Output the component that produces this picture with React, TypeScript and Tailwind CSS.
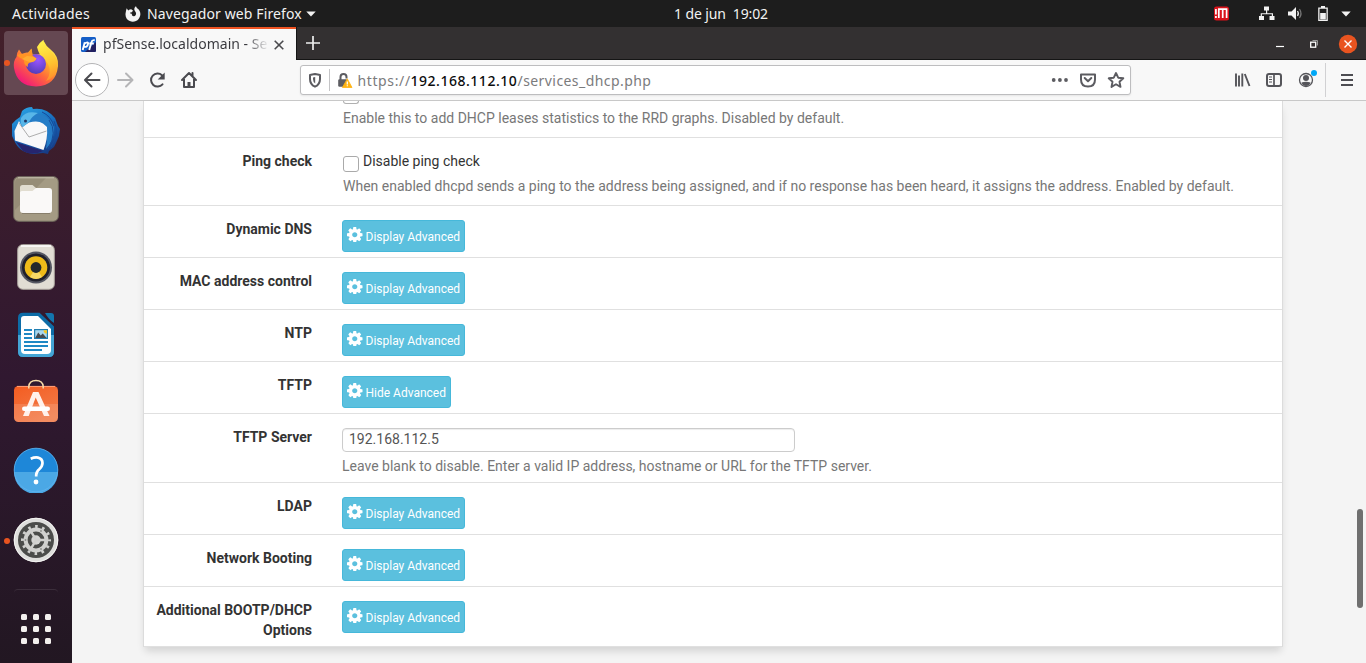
import React from 'react';

const ubuntu = "font-['Noto_Sans',sans-serif]";

const GEAR =
  'M1024 896q0-106-75-181t-181-75-181 75-75 181 75 181 181 75 181-75 75-181zm512-109v222q0 12-8 23t-20 13l-185 28q-19 54-39 91 35 50 107 138 10 12 10 25t-9 23q-27 37-99 108t-94 71q-12 0-26-9l-138-108q-44 23-91 38-16 136-29 186-7 28-36 28h-222q-14 0-24.500-8.500t-11.500-21.500l-28-184q-49-16-90-37l-141 107q-10 9-25 9-14 0-25-11-126-114-165-168-7-10-7-23 0-12 8-23 15-21 51-66.500t54-70.500q-27-50-41-99l-183-27q-13-2-21-12.500t-8-23.500v-222q0-12 8-23t19-13l186-28q14-46 39-92-40-57-107-138-10-12-10-24 0-10 9-23 26-36 98.500-107.500t94.500-71.500q13 0 26 10l138 107q44-23 91-38 16-136 29-186 7-28 36-28h222q14 0 24.500 8.500t11.500 21.500l28 184q49 16 90 37l142-107q9-9 24-9 13 0 25 10 129 119 165 170 7 8 7 22 0 12-8 23-15 21-51 66.500t-54 70.500q26 50 41 98l183 28q13 2 21 12.500t8 23.500z';

function AdvButton({ label }: { label: string }) {
  return (
    <button
      className={`flex h-8 items-center rounded-[3px] border border-[#46b8da] bg-[#5bc0de] pl-1 text-[12px] text-white ${
        label === 'Hide Advanced' ? 'w-[109px]' : 'w-[123px]'
      }`}
    >
      <svg viewBox="0 128 1536 1536" className="mb-[3px] h-[15.5px] w-[15.5px] shrink-0" fill="#fff">
        <path d={GEAR} />
      </svg>
      <span className="ml-[3px] mt-px whitespace-nowrap">{label}</span>
    </button>
  );
}

function Row({ label, h, children }: { label: string; h: string; children: React.ReactNode }) {
  return (
    <div className={`flex shrink-0 border-b border-[#e0e0e0] ${h}`}>
      <div className="w-[168px] shrink-0 pt-[13px] text-right font-bold leading-5 text-[#333]">{label}</div>
      <div className="ml-[30px] pt-[14px]">{children}</div>
    </div>
  );
}

function TopBar() {
  return (
    <div className={`flex h-[27px] shrink-0 items-center bg-[#1d1d1d] text-[14px] text-[#f2f2f2] ${ubuntu}`}>
      <div className="w-[113px] whitespace-nowrap pl-3 tracking-[0.3px]">Actividades</div>
      <svg width="16" height="16" viewBox="0 0 16 16" className="ml-[12px] shrink-0">
        <path
          d="M1.700 2.200 3.200 4.400C4 3.700 5.200 3.300 6.200 3.300L8 4.500 6.900 6.200 5.200 6.400C5 7.400 5.800 8 6.900 7.800 6.600 9.300 7.500 10.500 9 10.300 11 10 11.500 8 10.700 6.200L9.500 4.300C9 2.700 9.700 1 11 .2 11.400 2 13.300 2.700 14.400 4.400 15.900 7 15.700 10.500 13.600 13 11.600 15.500 7.800 16.500 4.800 15.100 1.300 13.500-.1 10 .7 6.500 .8 5 1.400 3.500 1.700 2.200Z"
          fill="#f2f2f2"
        />
      </svg>
      <div className="ml-[6px] w-[155px] whitespace-nowrap tracking-[0.12px]">Navegador web Firefox</div>
      <svg width="10" height="6" viewBox="0 0 10 6" className="ml-[4px] shrink-0">
        <path d="M.3.500h9.400L5 5.500z" fill="#f2f2f2" />
      </svg>
      <div className="-mt-px ml-[358px] w-[96px] whitespace-nowrap tracking-[-0.12px]">1 de jun&nbsp; 19:02</div>
      <div className="grow" />
      <svg width="145" height="20" viewBox="0 0 145 20" className="mr-[7px] shrink-0">
        <rect x="0" y="2.500" width="15" height="14" rx="2.500" fill="#d9131b" />
        <path d="M1.900 5v5.500M1.900 12v2M4.800 14V5.200H12.600V14M8.700 5.200V14" fill="none" stroke="#fff" strokeWidth="1.700" />
        <g fill="#f2f2f2">
          <path d="M50 2.500h5v4h-5zM45 12h5v4h-5zM55.500 12h5v4h-5zM52 6h1.200v3.200h5.800V12h-1.200v-1.700H47.900V12h-1.200V9.200H52z" />
          <path d="M74 7.500h3.500l4.500-4.500v13l-4.500-4.500h-3.500z" />
          <path d="M104.200 3.500h2.800V2h4v1.500h2.800v13.500h-9.600z M105.500 4.800v10.900h7V4.800z" fillRule="evenodd" />
          <path d="M106.200 9h5.600v6.500h-5.600zM127.300 7.500h9.400L132 12.500z" />
        </g>
        <path d="M83.500 7q1.700 2.500 0 5" fill="none" stroke="#e6e6e6" strokeWidth="1.300" />
        <path d="M85.500 5q3 4.500 0 9" fill="none" stroke="#777" strokeWidth="1.200" />
      </svg>
    </div>
  );
}

function Firefox() {
  return (
    <svg width="48" height="48" viewBox="0 0 48 48">
      <defs>
        <linearGradient id="ffBody" x1=".85" y1=".1" x2=".2" y2=".95">
          <stop offset="0" stopColor="#fff44f" />
          <stop offset=".3" stopColor="#ffb52b" />
          <stop offset=".6" stopColor="#ff6a3a" />
          <stop offset="1" stopColor="#f0147e" />
        </linearGradient>
        <linearGradient id="ffTail" x1=".5" y1="0" x2=".7" y2="1">
          <stop offset="0" stopColor="#fff14a" />
          <stop offset=".6" stopColor="#ffc12f" />
          <stop offset="1" stopColor="#ff8b2b" />
        </linearGradient>
        <radialGradient id="ffGlobe" cx=".6" cy=".3" r=".75">
          <stop offset="0" stopColor="#9a55ff" />
          <stop offset="1" stopColor="#4f3cb7" />
        </radialGradient>
      </defs>
      <path d="M7 10.500 10 15Q13 13 16 13.500L19.500 9.500 20.500 15.500 30 15Q26 8 32 2.500 34 7 38 10 47 17 46 27 44 47 24 47.500 5 47 2 29 1 22 4.500 18 5 13 7 10.500Z" fill="url(#ffBody)" />
      <path d="M25 8Q27 4 31.500 .8 32 6.500 38 11.500 47 19 45 29 43 39 34 42 42 31 33 21 27 17 25 8Z" fill="url(#ffTail)" />
      <circle cx="24" cy="25" r="10" fill="url(#ffGlobe)" />
      <path d="M5 16Q10 14 15.500 15.500L19.500 10 20.500 16.500Q23 18.500 24.500 19.500 23 23 18 23.500 15 24.500 16 28 11 25 12 20 8 20 5 16Z" fill="#ff9525" />
      <path d="M15 17Q21 17 24.500 19.500 23 23 18 23.300 14 22 10 20Z" fill="#ffad32" />
    </svg>
  );
}

function Thunderbird() {
  return (
    <svg width="50" height="50" viewBox="0 0 50 50">
      <defs>
        <linearGradient id="tb" x1=".2" y1="0" x2=".7" y2="1">
          <stop offset="0" stopColor="#2aa3e4" />
          <stop offset=".5" stopColor="#1767b9" />
          <stop offset="1" stopColor="#173a83" />
        </linearGradient>
      </defs>
      <path d="M11 5Q15 1 21 1l1 2Q35 1 44 12l3 8 2 3-1 7-3 7-2 4-5 4-1 3-5-1-9 1Q8 47 3 34L1 30V18q3-4 8-7z" fill="url(#tb)" />
      <path d="M5 36 32 45Q21 50 12 45Z" fill="#26256e" />
      <path d="M10 12Q18 4 32 9 41 13 43 22 44 33 35 43 37 30 34 21 28 14 18 17Z" fill="#257dc7" />
      <path d="M8 15 11 21 18 16.500Q27 14 32 17.500L36 21Q37 33 32.500 44L4 34.500 3.500 25Z" fill="#f8f8f9" />
      <path d="M8 17 18 31 35.500 25" fill="none" stroke="#999" strokeWidth=".8" />
      <path d="M10 12Q15 4 27 7 21 10 18 16L12 21Q8.500 17 10 12Z" fill="#58b6e8" />
      <circle cx="14.500" cy="15" r="1.500" fill="#203866" />
      <path d="M38 14Q47 26 37 43M43 15Q49 27 40 41M31 6Q40 10 43 20" fill="none" stroke="#164b9b" strokeWidth="1" />
    </svg>
  );
}

function Files() {
  return (
    <svg width="46" height="46" viewBox="0 0 46 46">
      <rect x=".7" y=".7" width="44.600" height="44.600" rx="5" fill="#a49b84" stroke="#716b5e" />
      <path d="M2 34V7q0-5 5-5h26z" fill="#968d77" />
      <path d="M5 1.800h36" stroke="#c6c0b0" />
      <path d="M7 14v-2.500q0-2.500 2.500-2.500h10l3.500 3v5H7z" fill="#e1ddd0" />
      <path d="M7 16.500q0-1.500 2-1.500h10.500l3.500-3h13q3 0 3 3V34q0 3-3 3H10q-3 0-3-3z" fill="#faf9f8" />
      <path d="M9 37.500h28" stroke="#766d5d" opacity=".6" />
    </svg>
  );
}

function Rhythmbox() {
  return (
    <svg width="38" height="46" viewBox="0 0 38 46">
      <rect x=".7" y=".7" width="36.600" height="44.600" rx="5" fill="#e1ddd4" stroke="#aaa59e" />
      <path d="M4 2h30" stroke="#fff" strokeWidth="1.500" />
      <circle cx="19" cy="23.500" r="16" fill="#555762" />
      <circle cx="19" cy="23.500" r="14" fill="#20202b" />
      <circle cx="19" cy="23.500" r="11.300" fill="#efbb19" />
      <path d="M19 23.500 13 33.100A11.300 11.300 0 0 0 25 33.100Z" fill="#f8d865" />
      <circle cx="19" cy="23.500" r="5.400" fill="#24292c" />
    </svg>
  );
}

function Writer() {
  return (
    <svg width="38" height="46" viewBox="0 0 38 46">
      <path d="M6 .7h16.500L37 14.500V40q0 5-5 5H6q-5 0-5-5V5.700Q1 .7 6 .7Z" fill="#0d6ca7" />
      <path d="M1 23h36v17q0 5-5 5H6q-5 0-5-5z" fill="#44a5d5" />
      <path d="M7 4h14L34 17v21q0 4-4 4H8q-4 0-4-4V7q0-3 3-3Z" fill="#fff" />
      <path d="M28 1h6q3 0 3 3v7q-5-3-9-10Z" fill="#1375ad" />
      <path d="M7 18h8M7 22h8M7 26h8M7 30h24M7 34h24M7 38h18" stroke="#1f88c4" strokeWidth="2" />
      <rect x="17" y="17" width="14" height="10" fill="#207eb1" />
      <rect x="18.200" y="18.200" width="11.600" height="7.600" fill="#a9d7ed" />
      <path d="M18.200 26l3-5.500 2.500 3 2-2 4 4.500z" fill="#454b50" />
      <path d="M26.500 18.200h3.400v3.400q-3 0-3.400-3.400z" fill="#f9c71c" />
    </svg>
  );
}

function Software() {
  return (
    <svg width="46" height="44" viewBox="0 0 46 44">
      <defs>
        <linearGradient id="bag" x1="0" y1="0" x2=".6" y2="1">
          <stop offset="0" stopColor="#f45c20" />
          <stop offset="1" stopColor="#f27b49" />
        </linearGradient>
      </defs>
      <rect x="1" y="7" width="44" height="36" rx="4.500" fill="url(#bag)" />
      <path d="M1 25h44v14q0 4-4.500 4h-35q-4.500 0-4.500-4z" fill="#fff" opacity=".13" />
      <path d="M4 7.400h38" stroke="#ffa27c" />
      <path d="M15.800 9.500V7.500q.5-6 7.200-6t7.200 6v2" fill="none" stroke="#f8dca8" strokeWidth="1.500" />
      <path d="M20 13h5.500l8 17.500 3 6.500h-5.500L22.700 18.500 15.700 37H10z" fill="#fff1eb" />
      <rect x="9" y="27.500" width="28" height="4.500" rx="2.200" fill="#fff" />
    </svg>
  );
}

function Help() {
  return (
    <svg width="46" height="46" viewBox="0 0 46 46">
      <circle cx="23" cy="23" r="22" fill="#1e87d8" />
      <path d="M1 25h44a22 22 0 0 1-44 0z" fill="#4ba8e5" />
      <circle cx="23" cy="23" r="21.800" fill="none" stroke="#61b4ed" strokeWidth=".8" />
      <path d="M17.700 11.800q4-1.800 7.300-1.200 4.500 1 4.500 5.500 0 3.200-3.300 6.200-3 2.500-3 5.700v1.500" fill="none" stroke="#fff" strokeWidth="2.700" />
      <circle cx="23" cy="35" r="2.400" fill="#fff" />
    </svg>
  );
}

function Settings() {
  return (
    <svg width="46" height="46" viewBox="0 0 46 46">
      <circle cx="23" cy="23" r="22.300" fill="#dededc" />
      <circle cx="23" cy="23" r="21.700" fill="none" stroke="#f3f3f2" />
      <circle cx="23" cy="23" r="18" fill="#4b4c4a" />
      <circle cx="23" cy="23" r="13.500" fill="none" stroke="#d0d0ce" strokeWidth="3" strokeDasharray="2.600 4.470" strokeDashoffset="1.300" />
      <circle cx="23" cy="23" r="10.400" fill="none" stroke="#d0d0ce" strokeWidth="4" />
      <circle cx="23" cy="23" r="4.700" fill="#d5d5d3" />
      <path d="M23 23h10M23 23l-5-8.700M23 23l-5 8.700" stroke="#d0d0ce" strokeWidth="2.500" />
      <g fill="#8b8c8a">
        <circle cx="12.500" cy="23" r=".9" />
        <circle cx="28" cy="14" r=".9" />
        <circle cx="28" cy="32" r=".9" />
      </g>
    </svg>
  );
}

function DockItem({ children, running, active, h }: { children: React.ReactNode; running?: boolean; active?: boolean; h: string }) {
  return (
    <div className={`relative flex w-[72px] shrink-0 items-center justify-center ${h}`}>
      {active && <div className="absolute left-1 top-[2px] h-16 w-16 rounded-[4px] bg-[#654852]" />}
      <div className="relative">{children}</div>
      {running && <span className="absolute left-1 top-[31px] h-[6px] w-[6px] rounded-full bg-[#e95420]" />}
    </div>
  );
}

function Dock() {
  return (
    <div className="flex w-[72px] shrink-0 flex-col bg-linear-to-b from-[#43202a] via-[#301830] via-55% to-[#221722] pt-[2px]">
      <DockItem h="h-[68px]" running active><Firefox /></DockItem>
      <DockItem h="h-[68px]"><Thunderbird /></DockItem>
      <DockItem h="h-[68px]"><Files /></DockItem>
      <DockItem h="h-[68px]"><Rhythmbox /></DockItem>
      <DockItem h="h-[68px]"><Writer /></DockItem>
      <DockItem h="h-[64px]"><Software /></DockItem>
      <DockItem h="h-[74px]"><Help /></DockItem>
      <DockItem h="h-[66px]" running><Settings /></DockItem>
      <div className="mx-auto mt-[16px] h-[4px] w-11 rounded-t-lg border-t border-[#3b2e3b]" />
      <div className="mx-auto mt-[21px] grid grid-cols-3 gap-[6px]">
        {Array.from({ length: 9 }, (_, i) => (
          <span key={i} className="h-[6px] w-[6px] rounded-[1.5px] bg-[#f3f0ee]" />
        ))}
      </div>
    </div>
  );
}

function TabStrip() {
  return (
    <div className="flex h-[33px] shrink-0 bg-[#333031]">
      <div className={`flex w-[224px] items-center border-t-2 border-[#f05423] bg-[#f8f8f8] text-[14px] text-[#38383d] ${ubuntu}`}>
        <svg width="15" height="15" viewBox="0 0 15 15" className="ml-[9px] shrink-0">
          <rect width="15" height="15" rx="1.500" fill="#155ec7" />
          <path d="M15 5v8.500q0 1.500-1.500 1.500H4z" fill="#222060" />
          <path d="M1.700 13 3.800 5.200M3.300 6.700q4-2.700 3.800 0-.7 4-4.300 3M8.200 13 10.500 5Q11 2.800 13.700 3.200M8.300 6.500h4.500" fill="none" stroke="#fff" strokeWidth="1.900" />
        </svg>
        <div className="-mt-[2px] ml-[7px] w-[166px] whitespace-nowrap bg-linear-to-r from-[#38383d] from-86% to-[#38383d00] bg-clip-text tracking-[0.02px] text-transparent">
          pfSense.localdomain - Se
        </div>
        <svg width="10" height="10" viewBox="0 0 10 10" className="ml-[5px] shrink-0">
          <path d="M.7.700l8.600 8.600M9.300.700.700 9.300" stroke="#4a4a4d" strokeWidth="1.600" />
        </svg>
      </div>
      <div className="flex grow items-center border-b border-l border-[#151515]">
        <svg width="14" height="14" viewBox="0 0 14 14" className="ml-[9px]">
          <path d="M7 0v14M0 7h14" stroke="#eee" strokeWidth="1.700" />
        </svg>
        <div className="grow" />
        <svg width="90" height="20" viewBox="0 0 90 20" className="mr-[3px] mt-[2px]">
          <path d="M3 12.500h8" stroke="#fff" strokeWidth="1.200" />
          <path d="M39.500 6.500h5v5" fill="none" stroke="#999" />
          <rect x="37.700" y="8.200" width="5" height="5" fill="none" stroke="#fff" strokeWidth="1.300" />
          <circle cx="75" cy="10" r="9.200" fill="#e95420" />
          <path d="M71.500 6.500l7 7M78.500 6.500l-7 7" stroke="#fff" strokeWidth="1.400" />
        </svg>
      </div>
    </div>
  );
}

function Toolbar() {
  return (
    <div className="flex h-[41px] shrink-0 items-center border-b border-[#c8c8c8] bg-[#f8f8f8]">
      <svg width="140" height="40" viewBox="72 0 140 40" className="shrink-0" fill="none">
        <circle cx="92" cy="20" r="16.500" fill="#fff" stroke="#b4b4b6" />
        <path d="M99.500 20H85.500M91.500 13.500 85 20l6.500 6.500" stroke="#4b4b50" strokeWidth="2" strokeLinecap="round" strokeLinejoin="round" />
        <path d="M118 20h14M126 13.500l6.500 6.500-6.500 6.500" stroke="#b5b5b7" strokeWidth="2" strokeLinecap="round" strokeLinejoin="round" />
        <path d="M162.500 24.300A6.500 6.500 0 1 1 162 15.300" stroke="#4b4b50" strokeWidth="2" strokeLinecap="round" />
        <path d="M164.700 12.500v7h-7z" fill="#4b4b50" />
        <path d="M182 20l7-7 7 7M184 19v8h10v-8M192.500 13v3" stroke="#4b4b50" strokeWidth="2" strokeLinecap="round" strokeLinejoin="round" />
        <path d="M187.500 27v-5h3v5z" fill="#4b4b50" />
      </svg>
      <div className="ml-[88px] flex h-[30px] w-[831px] items-center rounded-[3px] border border-[#bdbdbf] bg-white shadow-[0_1px_2px_rgba(0,0,0,0.08)]">
        <svg width="54" height="28" viewBox="0 0 54 28" fill="none" className="shrink-0">
          <path d="M14 8q-3 .6-5 .9V13q0 5.500 5 7.700 5-2.200 5-7.700V8.900Q17 8.600 14 8z" stroke="#5c5c61" strokeWidth="2" strokeLinejoin="round" />
          <path d="M14.200 11v6.500Q12 16 12 13v-1.600z" fill="#5c5c61" />
          <path d="M28.500 3v22" stroke="#c4c4c6" />
          <path d="M39.500 14v-3q0-3 3-3t3 3v1.500" stroke="#5c5c61" strokeWidth="2" />
          <rect x="37.200" y="13.300" width="9" height="7.500" rx="1.300" fill="#5c5c61" />
          <path d="M46.300 12.800 51 21.500h-9.600z" fill="#ffb311" stroke="#ffb311" strokeWidth=".8" strokeLinejoin="round" />
          <path d="M46.300 15.500v3M46.300 19.300v1" stroke="#fff" strokeWidth="1.200" />
        </svg>
        <div className={`ml-[2.500px] flex whitespace-nowrap text-[14px] text-[#7b7b7d] ${ubuntu}`}>
          <span className="w-[53px] tracking-[0.62px]">https://</span>
          <span className="w-[107px] font-medium tracking-[0.52px] text-[#0c0c0d]">192.168.112.10</span>
          <span className="tracking-[0.43px]">/services_dhcp.php</span>
        </div>
        <div className="grow" />
        <svg width="82" height="28" viewBox="1048 0 82 28" fill="none" className="shrink-0">
          <g fill="#5c5c61">
            <circle cx="1053.700" cy="14" r="1.900" />
            <circle cx="1059.900" cy="14" r="1.900" />
            <circle cx="1066" cy="14" r="1.900" />
          </g>
          <path d="M1081 8.500h14v5q0 7-7 7t-7-7z" stroke="#5c5c61" strokeWidth="2" strokeLinejoin="round" />
          <path d="M1084.700 12l3.300 3.200 3.300-3.200" stroke="#5c5c61" strokeWidth="2" strokeLinecap="round" strokeLinejoin="round" />
          <path d="M1116 7l2.200 4.700 5.100.6-3.800 3.500 1 5.100-4.500-2.600-4.500 2.600 1-5.100-3.800-3.500 5.100-.6z" stroke="#5c5c61" strokeWidth="1.900" strokeLinejoin="round" />
        </svg>
      </div>
      <div className="grow" />
      <svg width="136" height="40" viewBox="1230 0 136 40" fill="none" className="shrink-0">
        <path d="M1236 13.500v13M1239 15.500v11M1242.300 13.500v13M1244.800 14l4.700 12" stroke="#55555a" strokeWidth="1.900" />
        <rect x="1267" y="14" width="14" height="12" rx="2" stroke="#55555a" strokeWidth="2" />
        <path d="M1274 14v12" stroke="#55555a" strokeWidth="1.700" />
        <path d="M1269 17h3M1269 19.500h3M1269 22h3" stroke="#55555a" />
        <circle cx="1306" cy="20" r="6.500" stroke="#55555a" strokeWidth="1.300" />
        <circle cx="1306" cy="18" r="3" fill="#55555a" />
        <path d="M1301.500 22.500q4.500-1.500 9 0-1 3.500-4.500 3.500t-4.500-3.500z" fill="#55555a" />
        <circle cx="1314" cy="13" r="3" fill="#00a8f7" />
        <path d="M1325.500 3v34" stroke="#d1d1d3" />
        <path d="M1341 15h12M1341 20h12M1341 25h12" stroke="#4d4d52" strokeWidth="2" />
      </svg>
    </div>
  );
}

const help = 'whitespace-nowrap leading-5 text-[#777]';

function Page() {
  return (
    <div className="flex min-h-0 grow overflow-hidden bg-[#f4f4f4] font-['Roboto',sans-serif] text-[14px]">
      <div className="ml-[71px] flex h-[546px] w-[1140px] shrink-0 flex-col border-l border-r border-[#dcdcdc] bg-white shadow-[0_6px_8px_-2px_rgba(0,0,0,0.14)]">
        <div className="h-[37px] shrink-0 border-b border-[#e0e0e0] pl-[199px]">
          <div className="h-[3px] w-4 rounded-b-[3px] border border-t-0 border-[#b0b0b0]" />
          <div className={`mt-1 ${help}`}>Enable this to add DHCP leases statistics to the RRD graphs. Disabled by default.</div>
        </div>
        <Row label="Ping check" h="h-[68px]">
          <div className="-mt-px ml-px flex h-5">
            <span className="mt-[5px] h-4 w-4 rounded-[3px] border border-[#aaa] bg-white" />
            <span className="ml-1 leading-5 text-[#333]">Disable ping check</span>
          </div>
          <div className={`ml-px mt-[5px] ${help}`}>
            When enabled dhcpd sends a ping to the address being assigned, and if no response has been heard, it assigns the address. Enabled by default.
          </div>
        </Row>
        <Row label="Dynamic DNS" h="h-[52px]"><AdvButton label="Display Advanced" /></Row>
        <Row label="MAC address control" h="h-[52px]"><AdvButton label="Display Advanced" /></Row>
        <Row label="NTP" h="h-[52px]"><AdvButton label="Display Advanced" /></Row>
        <Row label="TFTP" h="h-[52px]"><AdvButton label="Hide Advanced" /></Row>
        <Row label="TFTP Server" h="h-[69px]">
          <div className="h-6 w-[453px] rounded-[4px] border border-[#ccc] pl-[6px] leading-[21px] text-[#555] shadow-[inset_0_1px_1px_rgba(0,0,0,0.075)]">
            192.168.112.5
          </div>
          <div className={`mt-1 ${help}`}>Leave blank to disable. Enter a valid IP address, hostname or URL for the TFTP server.</div>
        </Row>
        <Row label="LDAP" h="h-[52px]"><AdvButton label="Display Advanced" /></Row>
        <Row label="Network Booting" h="h-[52px]"><AdvButton label="Display Advanced" /></Row>
        <Row label="Additional BOOTP/DHCP Options" h="h-[60px]"><AdvButton label="Display Advanced" /></Row>
      </div>
      <div className="grow" />
      <div className="mr-[3px] mt-[408px] h-[99px] w-[6px] rounded-full bg-[#6f6f6f]" />
    </div>
  );
}

export default function App() {
  return (
    <div className="flex h-[663px] w-[1366px] flex-col overflow-hidden">
      <TopBar />
      <div className="flex min-h-0 grow">
        <Dock />
        <div className="flex min-w-0 grow flex-col">
          <TabStrip />
          <Toolbar />
          <Page />
        </div>
      </div>
    </div>
  );
}
